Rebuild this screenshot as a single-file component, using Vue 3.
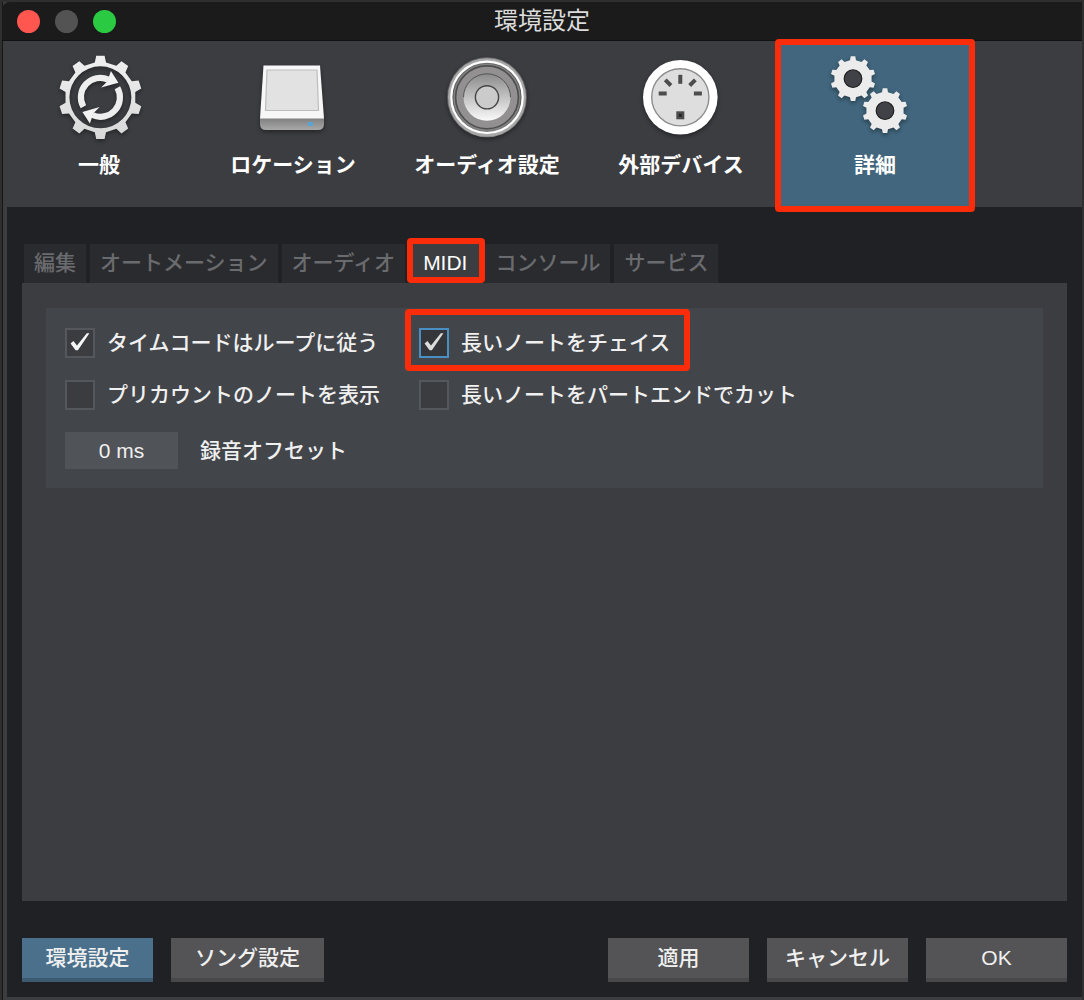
<template>
  <div class="window">
    <header class="titlebar">
      <div class="lights">
        <button class="light close" aria-label="閉じる"></button>
        <button class="light minimize" aria-label="しまう"></button>
        <button class="light zoom" aria-label="拡大"></button>
      </div>
      <h1 class="title">環境設定</h1>
    </header>

    <nav class="toolbar">
      <button
        v-for="section in sections"
        :key="section.id"
        class="section"
        :class="{ active: section.id === currentSection }"
        @click="currentSection = section.id"
      >
        <svg class="icon" viewBox="0 0 96 96" aria-hidden="true">
          <defs>
            <linearGradient id="metal" x1="0" y1="0" x2="0" y2="1">
              <stop offset="0" stop-color="#f0f0f0" />
              <stop offset="1" stop-color="#d8d8d8" />
            </linearGradient>
            <linearGradient id="rim" x1="0" y1="0" x2="0" y2="1">
              <stop offset="0" stop-color="#6f6f6f" />
              <stop offset="0.5" stop-color="#5a5a5a" />
              <stop offset="1" stop-color="#8a8a8a" />
            </linearGradient>
            <linearGradient id="cone" x1="0" y1="0" x2="0" y2="1">
              <stop offset="0" stop-color="#8b8b8b" />
              <stop offset="1" stop-color="#fafafa" />
            </linearGradient>
            <linearGradient id="base" x1="0" y1="0" x2="0" y2="1">
              <stop offset="0" stop-color="#7f7f7f" />
              <stop offset="1" stop-color="#a8a8a8" />
            </linearGradient>
          </defs>

          <g v-if="section.id === 'general'" transform="translate(49.4 48.3)">
            <path :d="bigGear" fill="url(#metal)" fill-rule="evenodd" />
            <g v-for="angle in [0, 180]" :key="angle" :transform="`rotate(${angle})`">
              <path d="M-17 9.5A19.4 19.4 0 0 1 8 -17.7" fill="none" stroke="#eeeeee" stroke-width="6.2" />
              <path d="M10.5 -26.3L18 -14.6L0.8 -9.8L7 -16Z" fill="#f2f2f2" />
            </g>
          </g>

          <g v-else-if="section.id === 'locations'">
            <path d="M15 69H79V75Q79 81 73 81H21Q15 81 15 75Z" fill="url(#base)" />
            <path d="M18.5 16.5H75L79 69.5H15Z" fill="#f7f7f7" />
            <path d="M22 21H72L73.5 61.5H20.5Z" fill="#e2e2e2" stroke="#bdbdbd" stroke-width="1.2" />
            <rect x="63" y="73" width="5" height="4" rx="1" fill="#55a5d6" />
          </g>

          <g v-else-if="section.id === 'audio'" transform="translate(48 48.3)">
            <circle r="40" fill="url(#rim)" />
            <circle r="37" fill="none" stroke="#a8a8a8" stroke-width="4" />
            <circle r="35.7" fill="none" stroke="#ffffff" stroke-width="2.2" />
            <circle r="33.6" fill="#838383" />
            <circle r="31.4" fill="#929090" stroke="#4e4e4e" stroke-width="1.6" />
            <circle r="23.5" fill="url(#cone)" />
            <path d="M-23.5 0A23.5 23.5 0 0 1 23.5 0" fill="none" stroke="#555555" stroke-width="1" />
            <circle r="11.6" fill="#cbcbcb" stroke="#454545" stroke-width="1.4" />
          </g>

          <g v-else-if="section.id === 'devices'" transform="translate(47.3 48.3)">
            <circle r="37.3" fill="#ffffff" />
            <circle r="28.6" fill="#dedede" stroke="#8c8c8c" stroke-width="1.4" />
            <g fill="#4d4d4d">
              <rect x="-2" y="-22.5" width="4" height="9" />
              <rect x="-2" y="-4" width="4" height="8" transform="translate(-12.2 -14.6) rotate(-45)" />
              <rect x="-2" y="-4" width="4" height="8" transform="translate(12.2 -14.6) rotate(45)" />
              <rect x="-21.6" y="-5.8" width="8" height="4" />
              <rect x="13.6" y="-5.8" width="8" height="4" />
              <rect x="-4" y="14" width="8" height="8" />
            </g>
            <rect x="-1.5" y="16.5" width="3" height="3" fill="#252525" />
          </g>

          <g v-else>
            <g v-for="pos in [[26, 29.7], [58, 61.7]]" :key="pos[0]" :transform="`translate(${pos})`">
              <path :d="smallGear" fill="#ececec" />
              <circle r="8.8" fill="#414247" stroke="#1f1f1f" stroke-width="1.2" />
            </g>
          </g>
        </svg>
        <span class="section-label">{{ section.label }}</span>
      </button>
    </nav>

    <main class="content">
      <div class="tabs" role="tablist">
        <button
          v-for="tab in tabs"
          :key="tab"
          class="tab"
          :class="{ active: tab === currentTab }"
          role="tab"
          :aria-selected="tab === currentTab"
          @click="currentTab = tab"
        >
          {{ tab }}
        </button>
      </div>

      <section class="panel">
        <div class="group">
          <label
            v-for="option in options"
            :key="option.label"
            class="option"
            :class="{ marked: option.marked }"
          >
            <span class="check">
              <input v-model="option.checked" type="checkbox" />
              <svg v-if="option.checked" viewBox="0 0 30 30" aria-hidden="true">
                <path d="M5.6 15.4L8.4 13L12 17.4L21.8 5.2H24.4L12.9 22.2H10.6Z" />
              </svg>
            </span>
            <span>{{ option.label }}</span>
          </label>
          <div class="offset">
            <input id="record-offset" v-model="recordOffset" class="number" type="text" />
            <label for="record-offset">録音オフセット</label>
          </div>
        </div>
      </section>

      <footer class="footer">
        <button class="button primary">環境設定</button>
        <button class="button song">ソング設定</button>
        <span class="spacer"></span>
        <button class="button">適用</button>
        <button class="button">キャンセル</button>
        <button class="button">OK</button>
      </footer>
    </main>
  </div>
</template>

<script setup>
import { ref } from 'vue'

const sections = [
  { id: 'general', label: '一般' },
  { id: 'locations', label: 'ロケーション' },
  { id: 'audio', label: 'オーディオ設定' },
  { id: 'devices', label: '外部デバイス' },
  { id: 'advanced', label: '詳細' }
]
const currentSection = ref('advanced')

const tabs = ['編集', 'オートメーション', 'オーディオ', 'MIDI', 'コンソール', 'サービス']
const currentTab = ref('MIDI')

const options = ref([
  { label: 'タイムコードはループに従う', checked: true },
  { label: '長いノートをチェイス', checked: true, marked: true },
  { label: 'プリカウントのノートを表示', checked: false },
  { label: '長いノートをパートエンドでカット', checked: false }
])
const recordOffset = ref('0 ms')

// outline of a ten-toothed gear centred on 0,0
const gear = (outer, body, tip, foot) => {
  const points = []
  for (let i = 0; i < 10; i++) {
    const a = (i * Math.PI) / 5 - Math.PI / 2
    for (const [r, d] of [[body, -foot], [outer, -tip], [outer, tip], [body, foot]]) {
      points.push(`${(r * Math.cos(a + d)).toFixed(2)} ${(r * Math.sin(a + d)).toFixed(2)}`)
    }
  }
  return `M${points.join('L')}Z`
}

const bigGear = gear(41.8, 35.3, 0.1, 0.16) + 'M31 0A31 31 0 1 0 -31 0A31 31 0 1 0 31 0Z'
const smallGear = gear(22.5, 18.8, 0.1, 0.16)
</script>

<style>
body {
  margin: 0;
  background: #2b2b2c;
}
</style>

<style scoped>
.window {
  display: flex;
  flex-direction: column;
  box-sizing: border-box;
  min-height: 100vh;
  border: 2px solid #2f2f30;
  border-bottom: 0;
  background: #3c3d41;
  box-shadow: inset 1px 0 #161617;
  color: #f0f0f0;
  font-family: "Liberation Sans", "Noto Sans CJK JP", sans-serif;
  font-size: 21px;
  font-weight: 500;
  line-height: 24px;
}
button,
input {
  margin: 0;
  padding: 0;
  border: 0;
  border-radius: 0;
  background: none;
  color: inherit;
  font: inherit;
}
button {
  cursor: pointer;
}

.titlebar {
  display: grid;
  grid-template-columns: 1fr auto 1fr;
  align-items: center;
  height: 38px;
  border-bottom: 1px solid #111112;
  border-radius: 8px 0 0;
  background: #1b1b1b;
}
.lights {
  display: flex;
  gap: 15px;
  padding-left: 15px;
}
.light {
  width: 23px;
  height: 23px;
  border-radius: 50%;
}
.close {
  background: #ff5650;
}
.minimize {
  background: #535353;
}
.zoom {
  background: #2acb42;
}
.title {
  margin: 0;
  color: #dcdcdc;
  font-size: 24px;
  font-weight: normal;
}

.toolbar {
  display: flex;
  height: 166px;
}
.section {
  position: relative;
  display: flex;
  flex: 0 1 194px;
  flex-direction: column;
  align-items: center;
  gap: 8px;
  padding-top: 8px;
  color: #ffffff;
  font-weight: bold;
}
.section.active {
  background: #41667d;
}
.icon {
  width: 96px;
  height: 96px;
  filter: drop-shadow(0 2px 2px rgba(0, 0, 0, 0.4));
}
.section-label {
  white-space: nowrap;
}

/* red callout frames */
.section.active::after,
.tab.active::after,
.marked::after {
  content: "";
  position: absolute;
  z-index: 1;
  border: 6px solid #fb2c0a;
  border-radius: 4px;
  pointer-events: none;
}
.section.active::after {
  inset: -2px -3px -5px;
}
.tab.active::after {
  inset: -6px -4px 0 -2px;
}
.marked::after {
  inset: -19px -20px -13px -14px;
}

.content {
  display: flex;
  flex: 1;
  flex-direction: column;
  margin: 0 0 3px 5px;
  padding: 37px 15px 15px;
  background: #202125;
}
.tabs {
  display: flex;
  gap: 4px;
  padding-left: 2px;
}
.tab {
  position: relative;
  height: 39px;
  padding: 0 10px 2px;
  background: #2a2b2f;
  color: #6a6b6e;
  white-space: nowrap;
}
.tab.active {
  padding: 0 14px 2px;
  background: #3c3d41;
  color: #ffffff;
}

.panel {
  flex: 1;
  padding: 25px 24px;
  background: #3c3d41;
}
.group {
  display: grid;
  grid-template-columns: max-content max-content;
  gap: 22px 39px;
  padding: 20px 19px 19px;
  background: #424549;
}
.option {
  position: relative;
  display: flex;
  align-items: center;
  justify-self: start;
  gap: 12px;
  white-space: nowrap;
}
.check {
  display: grid;
}
.check > * {
  grid-area: 1 / 1;
  width: 30px;
  height: 30px;
}
.check input {
  box-sizing: border-box;
  border: 2px solid #54575b;
  background: #3a3c40;
  appearance: none;
}
.check svg {
  fill: #f5f5f5;
  pointer-events: none;
}
.marked .check input {
  border-color: #4a8fc4;
  background: #34363a;
}
.marked .check svg {
  fill: #dcdcdc;
}
.offset {
  display: flex;
  grid-column: 1 / -1;
  align-items: center;
  gap: 22px;
}
.number {
  width: 113px;
  height: 37px;
  background: #505357;
  text-align: center;
}

.footer {
  display: flex;
  gap: 18px;
  padding-top: 37px;
}
.spacer {
  flex: 1;
}
.button {
  width: 141px;
  height: 44px;
  border-bottom: 4px solid #48484a;
  background: #545456;
  white-space: nowrap;
}
.primary {
  width: 131px;
  border-color: #3d5b70;
  background: #4a708c;
}
.song {
  width: 153px;
}
</style>
